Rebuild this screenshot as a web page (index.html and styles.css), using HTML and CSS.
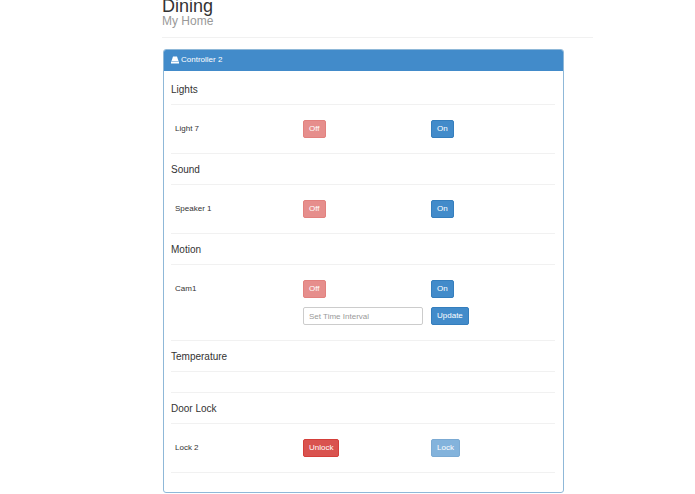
FILE: index.html
```html
<!DOCTYPE html>
<html lang="en">
	<head>
		<meta charset="utf-8" />
		<title>Dining</title>
		<link rel="stylesheet" href="styles.css">
	</head>
	<body>
		<main class="content">
			<h1 class="page-header">Dining <small>My Home</small></h1>

			<div class="panel">
				<div class="panel-heading">
					<svg class="icon" viewBox="0 0 16 16" aria-hidden="true">
						<path d="M4 1h8l3 9H1z" />
						<path d="M0 11h16v4H0z" />
					</svg>
					Controller 2
				</div>
				<div class="panel-body">
					<h2>Lights</h2>
					<div class="devices">
						<div class="row">
							<span>Light 7</span>
							<div><button type="button" class="btn danger" disabled>Off</button></div>
							<div><button type="button" class="btn primary">On</button></div>
						</div>
					</div>

					<h2>Sound</h2>
					<div class="devices">
						<div class="row">
							<span>Speaker 1</span>
							<div><button type="button" class="btn danger" disabled>Off</button></div>
							<div><button type="button" class="btn primary">On</button></div>
						</div>
					</div>

					<h2>Motion</h2>
					<div class="devices">
						<div class="row">
							<span>Cam1</span>
							<div><button type="button" class="btn danger" disabled>Off</button></div>
							<div><button type="button" class="btn primary">On</button></div>
						</div>
						<form class="row">
							<span></span>
							<div><input type="text" class="interval" placeholder="Set Time Interval" aria-label="Set Time Interval" /></div>
							<div><button type="button" class="btn primary">Update</button></div>
						</form>
					</div>

					<h2>Temperature</h2>
					<div class="devices empty"></div>

					<h2>Door Lock</h2>
					<div class="devices">
						<div class="row">
							<span>Lock 2</span>
							<div><button type="button" class="btn danger">Unlock</button></div>
							<div><button type="button" class="btn primary" disabled>Lock</button></div>
						</div>
					</div>
				</div>
			</div>
		</main>
	</body>
</html>
```

FILE: styles.css
```css
* {
	box-sizing: border-box;
}

body {
	margin: 0;
	background: #fff;
	color: #333;
	font-family: "Liberation Sans", Arial, sans-serif;
	font-size: 8px;
	line-height: 10px;
}

.content {
	margin-left: 162px;
	margin-right: 102px;
}

.page-header {
	margin: 0 0 11px;
	padding-bottom: 10px;
	border-bottom: 1px solid #f1f1f1;
	font-size: 18px;
	font-weight: normal;
	line-height: 12px;
}

.page-header small {
	display: block;
	padding-top: 3px;
	color: #999;
	font-size: 12px;
}

/* panel */
.panel {
	margin: 0 29px 0 1px;
	border: 1px solid #8fb8d8;
	border-radius: 3px;
}

.panel-heading {
	display: flex;
	align-items: center;
	gap: 2px;
	padding: 5px 7px 6px;
	border-radius: 2px 2px 0 0;
	background: #428bca;
	color: #fff;
}

.icon {
	width: 8px;
	height: 8px;
	fill: #fff;
}

.panel-body {
	padding: 3px 8px 19px 7px;
}

h2 {
	margin: 0;
	padding: 11px 0 9px;
	border-bottom: 1px solid #f1f1f1;
	font-size: 10px;
	font-weight: normal;
	line-height: 10px;
}

.devices {
	display: grid;
	gap: 9px;
	padding: 15px 0;
	border-bottom: 1px solid #f1f1f1;
}

.devices.empty {
	padding: 10px 0;
}

.row {
	display: grid;
	grid-template-columns: repeat(3, 1fr);
	align-items: center;
}

.row > * {
	padding: 0 4px;
}

/* controls */
.btn,
.interval {
	display: block;
	height: 18px;
	padding: 0 5px;
	border: 1px solid #ccc;
	border-radius: 2px;
	font: inherit;
}

.btn {
	color: #fff;
}

.btn:disabled {
	opacity: .65;
}

.primary {
	background: #428bca;
	border-color: #357ebd;
}

.danger {
	background: #d9534f;
	border-color: #d43f3a;
}

.interval {
	width: 100%;
	color: #555;
}

.interval::placeholder {
	color: #999;
}
```
